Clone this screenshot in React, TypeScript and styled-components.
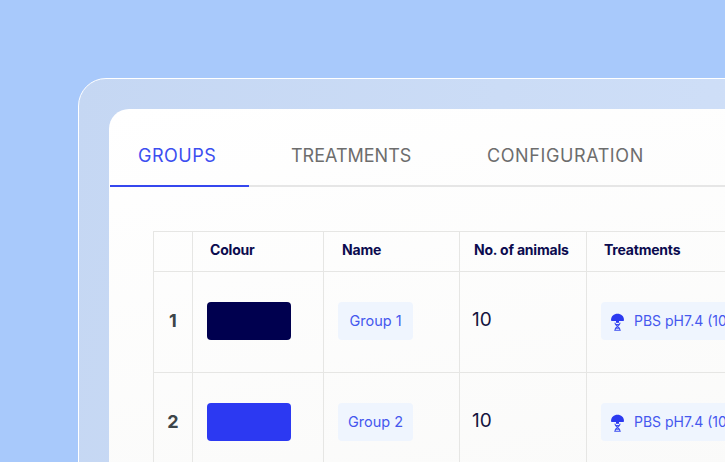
import React from "react";
import styled, { createGlobalStyle } from "styled-components";

const Global = createGlobalStyle`
  html, body { margin: 0; padding: 0; }
  body { width: 725px; height: 462px; overflow: hidden; background: #a8c9fb; font-family: Inter, "Liberation Sans", sans-serif; }
`;

const Stage = styled.div`
  width: 725px;
  height: 462px;
  overflow: hidden;
  padding: 78px 0 0 78px;
  box-sizing: border-box;
`;

const Shell = styled.div`
  width: 760px;
  height: 500px;
  box-sizing: border-box;
  padding: 30px 0 0 30px;
  border: 1px solid #fff;
  border-radius: 28px 0 0 0;
  background: linear-gradient(100deg, #c5d7f3 0%, #cbdcf6 50%, #d1e0f8 100%);
`;

const Card = styled.div`
  height: 480px;
  border-radius: 20px 0 0 0;
  background: linear-gradient(170deg, #ffffff 0%, #fafaf9 75%);
  padding-top: 29px;
`;

const TabBar = styled.div`
  display: flex;
  height: 47px;
  margin-left: 1px;
  border-bottom: 2px solid #e6e6e6;
`;

const Tab = styled.div<{ $active?: boolean; $width: number; $left: number; $spacing: number }>`
  width: ${(p) => p.$width}px;
  height: 47px;
  padding-left: ${(p) => p.$left}px;
  font-size: 18px;
  line-height: 36px;
  letter-spacing: ${(p) => p.$spacing}px;
  white-space: nowrap;
  color: ${(p) => (p.$active ? "#3c4ef0" : "#6d6d6d")};
  border-bottom: 2px solid ${(p) => (p.$active ? "#3547ee" : "transparent")};
`;

const Table = styled.div`
  display: grid;
  grid-template-columns: 39px 131px 136px 127px 200px;
  grid-template-rows: 40px;
  grid-auto-rows: 101px;
  margin: 44px 0 0 44px;
  border-top: 1px solid #e6e6e4;
  border-left: 1px solid #e6e6e4;
  width: 633px;
`;

const Head = styled.div<{ $left?: number }>`
  display: flex;
  align-items: center;
  padding: 0 0 5px ${(p) => p.$left ?? 17}px;
  font-size: 14px;
  font-weight: 700;
  letter-spacing: -0.2px;
  color: #0b0b4f;
  white-space: nowrap;
  border-right: 1px solid #e6e6e4;
  border-bottom: 1px solid #e6e6e4;
`;

const Cell = styled.div`
  display: flex;
  align-items: center;
  padding: 0 0 2px 14px;
  border-right: 1px solid #e6e6e4;
  border-bottom: 1px solid #e6e6e4;
  overflow: hidden;
`;

const IndexCell = styled(Cell)`
  justify-content: center;
  padding: 0 0 4px;
  font-size: 18px;
  font-weight: 700;
  color: #3d4549;
`;

const Swatch = styled.div<{ $color: string }>`
  width: 84px;
  height: 38px;
  border-radius: 4px;
  background: ${(p) => p.$color};
`;

const Chip = styled.div`
  display: flex;
  align-items: center;
  justify-content: center;
  box-sizing: border-box;
  width: 75px;
  height: 38px;
  padding-bottom: 2px;
  border-radius: 4px;
  background: #eff5fe;
  color: #4558ee;
  font-size: 14.5px;
  white-space: nowrap;
`;

const TreatmentChip = styled(Chip)`
  justify-content: flex-start;
  gap: 8px;
  padding: 0 0 1px 9px;
  width: 190px;
  border-radius: 4px 0 0 4px;
  font-size: 14px;
`;

const Count = styled.div`
  font-size: 19px;
  margin-bottom: 3px;
  color: #15153f;
`;

const AnimalCell = styled(Cell)`
  padding-left: 12px;
`;

const TreatCell = styled(Cell)`
  border-right: 0;
`;

const ReagentIcon = () => (
  <svg width="16" height="20" viewBox="0 0 16 20" fill="none" aria-hidden="true">
    <path d="M1 9.300C1 5 4 2.700 7.500 2.700S14 5 14 9.300c0 .5-.4.8-.9.8H1.900C1.400 10.100 1 9.800 1 9.300Z" fill="#2b3af0" />
    <rect x="6" y="10" width="3" height="1.800" fill="#2b3af0" />
    <path d="M5 12c0 3 5 3.500 5 7M10 12c0 3-5 3.500-5 7M4.700 19.300h5.600M5.800 13.500h3.400M5.800 17.300h3.400" stroke="#3c4ef0" strokeWidth="1.100" strokeLinecap="round" />
  </svg>
);

const rows = [
  { n: 1, color: "#00004f", name: "Group 1" },
  { n: 2, color: "#2c39f2", name: "Group 2" },
];

export default function App() {
  return (
    <Stage>
      <Global />
      <Shell>
        <Card>
          <TabBar>
            <Tab $active $width={111} $left={28} $spacing={0.5}>GROUPS</Tab>
            <Tab $width={152} $left={42} $spacing={0}>TREATMENTS</Tab>
            <Tab $width={160} $left={44} $spacing={0.6}>CONFIGURATION</Tab>
          </TabBar>
          <Table>
            <Head />
            <Head>Colour</Head>
            <Head $left={18}>Name</Head>
            <Head $left={14}>No. of animals</Head>
            <Head $left={17}>Treatments</Head>
            {rows.map((r) => (
              <React.Fragment key={r.n}>
                <IndexCell>{r.n}</IndexCell>
                <Cell><Swatch $color={r.color} /></Cell>
                <Cell><Chip>{r.name}</Chip></Cell>
                <AnimalCell><Count>10</Count></AnimalCell>
                <TreatCell>
                  <TreatmentChip><ReagentIcon />PBS pH7.4 (10 mL)</TreatmentChip>
                </TreatCell>
              </React.Fragment>
            ))}
          </Table>
        </Card>
      </Shell>
    </Stage>
  );
}
